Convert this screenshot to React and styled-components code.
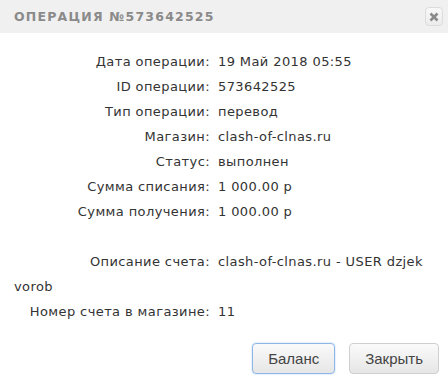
import styled, { createGlobalStyle } from "styled-components";

const Global = createGlobalStyle`
  html, body {
    margin: 0;
    padding: 0;
    background: #fff;
  }
`;

const rows = [
  ["Дата операции:", "19 Май 2018 05:55"],
  ["ID операции:", "573642525"],
  ["Тип операции:", "перевод"],
  ["Магазин:", "clash-of-clnas.ru"],
  ["Статус:", "выполнен"],
  ["Сумма списания:", "1 000.00 р"],
  ["Сумма получения:", "1 000.00 р"],
  null,
  ["Описание счета:", "clash-of-clnas.ru - USER dzjek vorob"],
  ["Номер счета в магазине:", "11"],
];

function App() {
  return (
    <>
      <Global />
      <Dialog>
        <Header>
          <Title>Операция №573642525</Title>
          <CloseBtn title="close">
            <svg width="10" height="10" viewBox="0 0 10 10">
              <path d="M1.5 1.5 L8.5 8.5 M8.5 1.5 L1.5 8.5" stroke="#8a8a8a" strokeWidth="2.6" />
            </svg>
          </CloseBtn>
        </Header>
        <Body>
          {rows.map((r, i) =>
            r ? (
              <Row key={i}>
                <Label>{r[0]}</Label>
                {r[1]}
              </Row>
            ) : (
              <Row key={i}>&nbsp;</Row>
            )
          )}
        </Body>
        <Footer>
          <Button $focused>Баланс</Button>
          <Button>Закрыть</Button>
        </Footer>
      </Dialog>
    </>
  );
}

const Dialog = styled.div`
  width: 448px;
  height: 384px;
  display: flex;
  flex-direction: column;
  background: #fff;
`;

const Header = styled.div`
  height: 33px;
  background: #f0f0f0;
  display: flex;
  align-items: center;
  justify-content: space-between;
  padding: 0 5px 0 14px;
`;

const Title = styled.div`
  font-family: "DejaVu Sans", sans-serif;
  font-weight: bold;
  font-size: 12.5px;
  letter-spacing: 1.2px;
  text-transform: uppercase;
  color: #8a8a8a;
`;

const CloseBtn = styled.div`
  width: 18px;
  height: 19px;
  box-sizing: border-box;
  border: 1px solid #dcdcdc;
  border-radius: 4px;
  background: linear-gradient(#f8f8f8, #ececec);
  display: flex;
  align-items: center;
  justify-content: center;
`;

const Body = styled.div`
  padding: 16px 14px 0;
  font-family: "DejaVu Sans", sans-serif;
  font-size: 13px;
  letter-spacing: 0.4px;
  color: #333;
`;

const Row = styled.div`
  line-height: 25px;
`;

const Label = styled.span`
  display: inline-block;
  width: 196px;
  padding-right: 8px;
  text-align: right;
`;

const Footer = styled.div`
  margin-top: auto;
  display: flex;
  justify-content: flex-end;
  gap: 14px;
  padding: 0 9px 10px 0;
`;

const Button = styled.button`
  height: 31px;
  padding: 0 15px;
  font-family: "Liberation Sans", Arial, sans-serif;
  font-size: 15px;
  color: #444;
  border: 1px solid ${(p) => (p.$focused ? "#8eb6e8" : "#cfcfcf")};
  border-radius: 4px;
  background: linear-gradient(#fafafa, #e6e6e6);
  box-shadow: ${(p) => (p.$focused ? "0 0 2px #aaccf0" : "none")};
`;

export default App;
